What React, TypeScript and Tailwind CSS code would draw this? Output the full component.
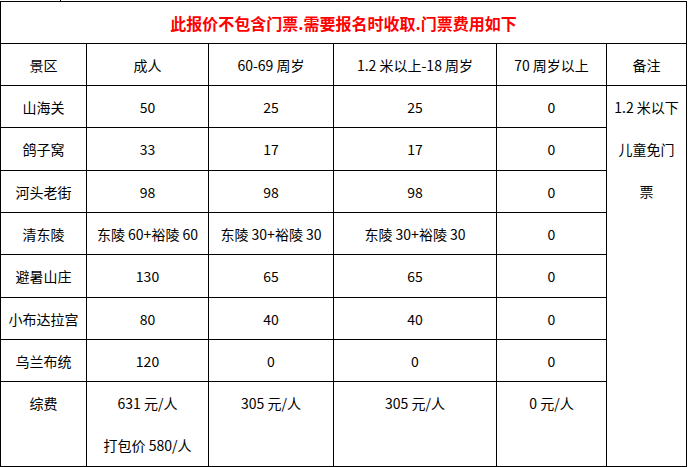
import React from 'react';

const rows: { cells: string[]; h: string }[] = [
  { cells: ['山海关', '50', '25', '25', '0'], h: 'h-[42px]' },
  { cells: ['鸽子窝', '33', '17', '17', '0'], h: 'h-[43px]' },
  { cells: ['河头老街', '98', '98', '98', '0'], h: 'h-[42px]' },
  { cells: ['清东陵', '东陵 60+裕陵 60', '东陵 30+裕陵 30', '东陵 30+裕陵 30', '0'], h: 'h-[42px]' },
  { cells: ['避暑山庄', '130', '65', '65', '0'], h: 'h-[43px]' },
  { cells: ['小布达拉宫', '80', '40', '40', '0'], h: 'h-[42px]' },
  { cells: ['乌兰布统', '120', '0', '0', '0'], h: 'h-[42px]' },
];

const cell = 'border border-black text-center align-middle p-0 whitespace-nowrap';
const last = 'border border-black text-center align-top p-0 whitespace-nowrap h-[83px] leading-[42px]';

export default function App() {
  return (
    <div className="w-[688px] h-[467px] bg-white text-black text-[14px] leading-[20px]" style={{ fontFamily: '"Noto Sans CJK SC", "Noto Sans", sans-serif' }}>
      {/* stub of the row above */}
      <div className="h-px">
        <div className="ml-[60px] w-px h-px bg-black" />
      </div>
      <table className="border-collapse table-fixed w-[686px]">
        <colgroup>
          <col className="w-[86px]" />
          <col className="w-[122px]" />
          <col className="w-[125px]" />
          <col className="w-[163px]" />
          <col className="w-[110px]" />
          <col className="w-[80px]" />
        </colgroup>
        <tbody>
          <tr>
            <td colSpan={6} className={`${cell} h-[42px] text-[#ff0000] font-bold text-[16px]`}>
              此报价不包含门票.需要报名时收取.门票费用如下
            </td>
          </tr>
          <tr>
            {['景区', '成人', '60-69 周岁', '1.2 米以上-18 周岁', '70 周岁以上', '备注'].map((h) => (
              <td key={h} className={`${cell} h-[42px]`}>{h}</td>
            ))}
          </tr>
          {rows.map((r, i) => (
            <tr key={r.cells[0]}>
              {r.cells.map((c, j) => (
                <td key={j} className={`${cell} ${r.h}`}>{c}</td>
              ))}
              {i === 0 && (
                <td rowSpan={8} className="border border-black text-center align-top p-0 leading-[42px]">
                  <div>1.2 米以下</div>
                  <div>儿童免门</div>
                  <div>票</div>
                </td>
              )}
            </tr>
          ))}
          <tr>
            <td className={last}>综费</td>
            <td className={last}>
              <div>631 元/人</div>
              <div>打包价 580/人</div>
            </td>
            <td className={last}>305 元/人</td>
            <td className={last}>305 元/人</td>
            <td className={last}>0 元/人</td>
          </tr>
        </tbody>
      </table>
    </div>
  );
}
